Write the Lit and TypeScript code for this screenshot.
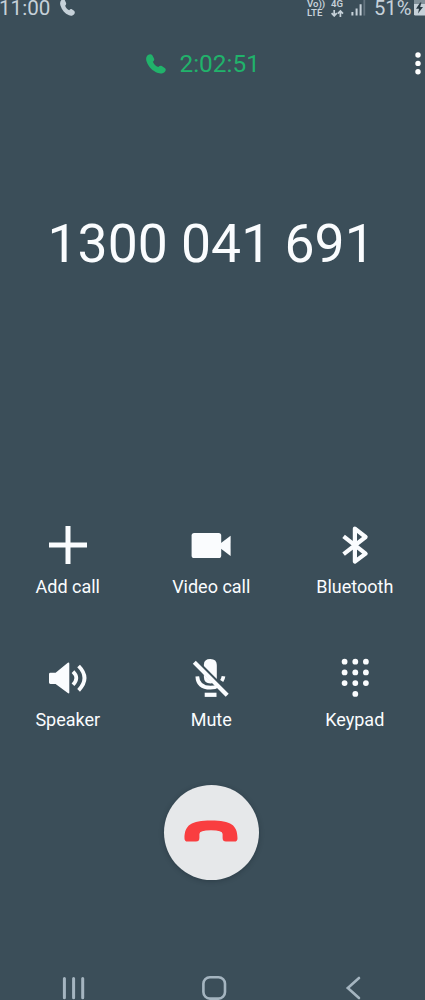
import { LitElement, html, css, svg } from "lit";
import { customElement } from "lit/decorators.js";

const HANDSET = svg`<path d="M2 1C3.5 -0.3 5.4 -0.1 6.3 1.3L8 4.4C8.6 5.9 8 6.8 6.9 7.8C7.8 10.2 9.8 12.3 12.3 13.1C13.4 12 14.5 11.5 15.8 12.1L18.7 13.9C20 14.8 20.1 16.3 19.1 17.5C17.4 19.5 14.9 20.1 12 19.1C6.4 17.1 2.5 12.9 0.6 7.6C-0.4 4.7 0.2 2.5 2 1Z"/>`;

const ICONS = {
  add: svg`<path d="M24 5V43M5 24H43" stroke="currentColor" stroke-width="5" fill="none"/>`,
  video: svg`<rect x="4.6" y="12" width="29.6" height="25" rx="2.6"/><path d="M34 22L43.6 14.8V35L34 27.8Z"/>`,
  bluetooth: svg`<path d="M12.6 15.4L34.6 32.6L23.9 40.6V7.6L34.6 16L12.6 33.2" fill="none" stroke="currentColor" stroke-width="4.2" stroke-linejoin="round"/>`,
  speaker: svg`<path d="M6.4 18.8H11.6L23.8 8.8Q25.3 8 25.3 9.8V38.4Q25.3 40 23.8 39L11.6 30H6.4Q5 30 5 28.6V20.2Q5 18.8 6.4 18.8Z"/>
    <path d="M29 17.6Q35.6 24 29 30.8M34.6 12Q46.4 24 34.6 36.4" fill="none" stroke="currentColor" stroke-width="3.8"/>`,
  mute: svg`<path d="M16.9 12V10.5Q17 5 23.3 5Q29.8 5 29.8 11V25Z"/>
    <path d="M16.9 20.6V23Q17 29.5 23.5 29.5Q24.8 29.5 25.8 29.1Z"/>
    <path d="M10.3 22.3Q10.8 33.6 23.5 33.7Q28.2 33.7 31.4 31.4M34.7 27Q36.1 25 36.5 22.3" fill="none" stroke="currentColor" stroke-width="3.7"/>
    <rect x="17.7" y="38.7" width="11.8" height="4.2"/>
    <path d="M7.3 8.3L40.2 41.2" stroke="currentColor" stroke-width="4.2"/>`,
  keypad: svg`${[7.7, 18.4, 29.1].map((y) => [13.6, 24.3, 34.9].map((x) => svg`<circle cx=${x} cy=${y} r="2.9"/>`))}<circle cx="24.3" cy="39.9" r="2.9"/>`,
};

const ACTIONS: { icon: keyof typeof ICONS; label: string }[] = [
  { icon: "add", label: "Add call" },
  { icon: "video", label: "Video call" },
  { icon: "bluetooth", label: "Bluetooth" },
  { icon: "speaker", label: "Speaker" },
  { icon: "mute", label: "Mute" },
  { icon: "keypad", label: "Keypad" },
];

@customElement("app-root")
export class AppRoot extends LitElement {
  static styles = css`
    :host {
      display: flex;
      flex-direction: column;
      box-sizing: border-box;
      width: 425px;
      height: 1000px;
      overflow: hidden;
      background: #3b4e59;
      color: #fafcfe;
      font-family: Roboto, sans-serif;
      white-space: nowrap;
    }
    svg { display: block; flex: none; fill: currentColor; }
    .status {
      display: flex;
      height: 18px;
      color: #c6d1d9;
      font-size: 20.6px;
      line-height: 17px;
    }
    .clock { width: 58px; margin-left: -1px; }
    .status-call { margin-top: -1px; margin-left: 3px; }
    .network {
      display: flex;
      flex-direction: column;
      margin-left: auto;
      font-size: 9.6px;
      line-height: 8.5px;
      font-weight: 600;
    }
    .network.lte { width: 18px; }
    .network.data { width: 14px; margin-left: 6px; }
    .signal { margin-left: 6px; }
    .percent { width: 40px; margin-left: 8px; font-size: 20.2px; }
    .timer {
      display: flex;
      height: 29px;
      margin-top: 31px;
      padding-left: 145.5px;
      color: #21b26b;
      font-size: 24.4px;
      line-height: 29px;
    }
    .timer svg { margin-top: 4.5px; }
    .duration { margin-left: 14px; }
    .timer .more { margin: 2px 3.4px 0 auto; color: #fff; }
    .number {
      margin-top: 134px;
      padding-left: 47.5px;
      font-size: 53.5px;
      line-height: 64px;
    }
    .actions {
      display: grid;
      grid-template-columns: repeat(3, 143.5px);
      grid-auto-rows: 133px;
      margin: 245px 0 0 -4px;
    }
    .action { display: flex; flex-direction: column; align-items: center; }
    .label { margin-top: 7px; font-size: 18px; line-height: 21px; }
    .hangup {
      display: flex;
      align-items: center;
      justify-content: center;
      width: 95px;
      height: 95px;
      margin: -2px 0 0 164.3px;
      border-radius: 50%;
      background: #e6e8ea;
      box-shadow: 0 1px 5px rgba(20, 32, 40, 0.35);
      color: #f93e40;
    }
    .hangup svg { margin: 0 1px 3px 0; }
    .nav {
      display: flex;
      justify-content: space-between;
      margin-top: auto;
      padding: 0 64px 0 62px;
      color: #a5b5c0;
    }
    .nav svg { fill: none; stroke: currentColor; }
  `;

  render() {
    return html`
      <div class="status">
        <span class="clock">11:00</span>
        <svg class="status-call" width="15" height="17" viewBox="0 0 20 20" preserveAspectRatio="none">${HANDSET}</svg>
        <div class="network lte"><span>Vo))</span><span>LTE</span></div>
        <div class="network data">
          <span>4G</span>
          <svg width="13" height="8" viewBox="0 -1 13 8"><path d="M3.2 0V5.8M0.6 3.2L3.2 5.9L5.8 3.2M9.4 7V1M6.8 3.6L9.4 0.9L12 3.6" fill="none" stroke="currentColor" stroke-width="1.7"/></svg>
        </div>
        <svg class="signal" width="15" height="17" viewBox="0 0 15 17">
          <path d="M0.4 12H2.4V15.6H0.4ZM4.6 8.5H6.6V15.6H4.6ZM8.6 4.2H10.6V15.6H8.6Z"/>
          <path d="M12.4 0H14.2V15.6H12.4Z" opacity="0.3"/>
        </svg>
        <span class="percent">51%</span>
        <svg class="battery" width="11" height="17" viewBox="0 0 11 17">
          <path d="M0 0H11V4H0Z" opacity="0.5"/><path d="M0 4H11V15.6H1.4Q0 15.6 0 14.2Z"/>
          <path d="M6.2 2.5L2 8.8H5L4 13.5L9 6.9H6.2L7.4 2.5Z" fill="#293a44"/>
        </svg>
      </div>
      <div class="timer">
        <svg width="20" height="20" viewBox="0 0 20 20">${HANDSET}</svg>
        <span class="duration">2:02:51</span>
        <svg class="more" width="8" height="24" viewBox="0 0 8 24"><circle cx="4" cy="4" r="2.7"/><circle cx="4" cy="12.4" r="2.7"/><circle cx="4" cy="20.8" r="2.7"/></svg>
      </div>
      <div class="number">1300 041 691</div>
      <div class="actions">
        ${ACTIONS.map(
          (a) => html`<div class="action">
            <svg width="48" height="48" viewBox="0 0 48 48">${ICONS[a.icon]}</svg>
            <span class="label">${a.label}</span>
          </div>`
        )}
      </div>
      <div class="hangup">
        <svg width="54" height="22" viewBox="0 0 54 22"><path d="M3.6 21.5Q0.5 21.5 0.5 18.4C0.5 5 7 0.4 27 0.4S53.5 5 53.5 18.4Q53.5 21.5 50.4 21.5H42Q38.6 21.5 38.6 18V14Q38.6 10.3 27 10.3T15.4 14V18Q15.4 21.5 12 21.5Z"/></svg>
      </div>
      <div class="nav">
        <svg width="24" height="25" viewBox="0 0 24 25"><path d="M2.4 3.4V22.8M11.6 3.4V22.8M20.7 3.4V22.8" stroke-width="3" stroke-linecap="round"/></svg>
        <svg width="28" height="25" viewBox="0 0 28 25"><rect x="1.4" y="2.2" width="21.6" height="21.4" rx="6.5" stroke-width="2.6"/></svg>
        <svg width="16" height="25" viewBox="0 0 16 25"><path d="M14 3L2.8 13L14 23" stroke-width="2.6" stroke-linecap="round"/></svg>
      </div>
    `;
  }
}
